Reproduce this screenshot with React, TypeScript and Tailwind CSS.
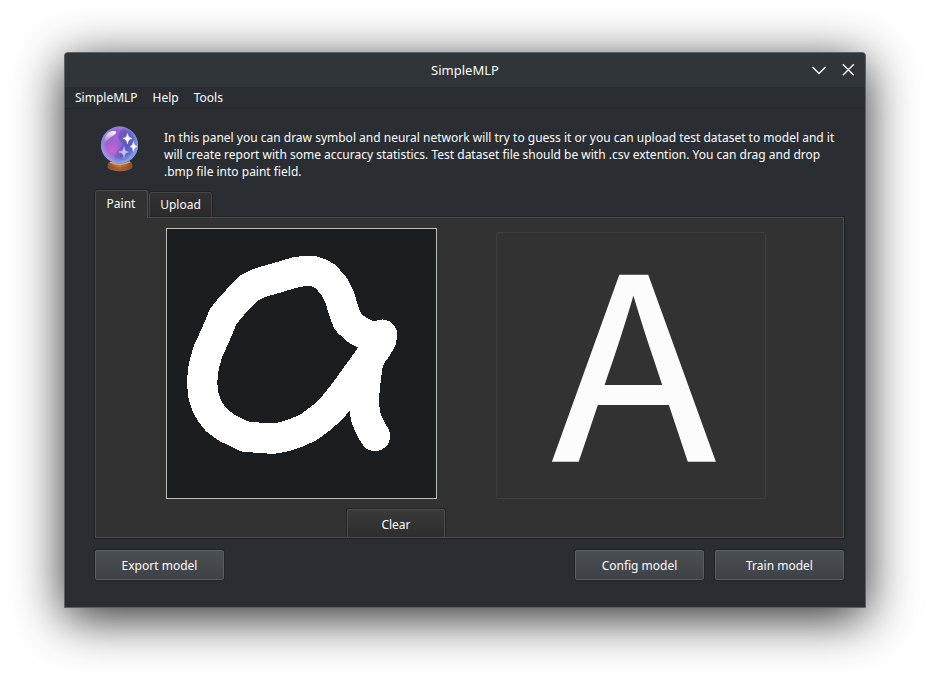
import type { ReactNode } from "react";

function CrystalBall() {
  return (
    <svg className="block h-[48px] w-[40px] shrink-0" viewBox="0 0 40 48">
      <defs>
        <linearGradient id="ball" x1="0.05" y1="0.3" x2="1" y2="0.75">
          <stop offset="0" stopColor="#8a62cc" />
          <stop offset="0.35" stopColor="#a862d0" />
          <stop offset="0.65" stopColor="#6a66cc" />
          <stop offset="1" stopColor="#86b4f0" />
        </linearGradient>
        <radialGradient id="pink" cx="0.5" cy="0.5" r="0.5">
          <stop offset="0" stopColor="#c865d2" />
          <stop offset="1" stopColor="#b060d0" stopOpacity="0" />
        </radialGradient>
        <radialGradient id="rim" cx="0.5" cy="0.45" r="0.55">
          <stop offset="0.65" stopColor="#8fb8f4" stopOpacity="0" />
          <stop offset="1" stopColor="#92bdf6" stopOpacity="0.85" />
        </radialGradient>
        <linearGradient id="base" x1="0" y1="0" x2="1" y2="0">
          <stop offset="0" stopColor="#8a4f30" />
          <stop offset="0.5" stopColor="#bd7647" />
          <stop offset="1" stopColor="#87492a" />
        </linearGradient>
        <linearGradient id="shine" x1="0.7" y1="0" x2="0.2" y2="1">
          <stop offset="0" stopColor="#ffffff" stopOpacity="0.95" />
          <stop offset="1" stopColor="#ffffff" stopOpacity="0.15" />
        </linearGradient>
      </defs>
      <path d="M9 36 C7 38 7 41 8.500 42.500 C13 46 27 46 31.500 42.500 C33 41 33 38 31 36Z" fill="url(#base)" />
      <path d="M8 39.500 C14 43 26 43 32 39.500 M9 42 C15 44.700 25 44.700 31 42" stroke="#8a4e2b" strokeWidth="0.8" fill="none" />
      <circle cx="19.500" cy="19" r="18.500" fill="url(#ball)" />
      <path d="M25 2 C14 8 18 13 22 17 C25 22 11 25 15 37 C28 41 38 30 38 19 C38 10 33 4 25 2Z" fill="#5354b7" opacity="0.6" />
      <circle cx="12" cy="24" r="11" fill="url(#pink)" />
      <circle cx="19.500" cy="19" r="18.500" fill="url(#rim)" />
      <path d="M10 36.200 C16 39.200 24 39.200 30 35.700" stroke="#e7a16c" strokeWidth="1.500" fill="none" />
      <path d="M5 17 C3 10 9 4 15 5 C18 7 14 9 11 11 C8 13 7 15 5 17Z" fill="url(#shine)" />
      <path d="M27.500 7.500 Q28 12 32 12.500 Q28 13 27.500 18 Q27 13 23 12.500 Q27 12 27.500 7.500Z" fill="#fff" stroke="#fff" strokeWidth="0.5" />
      <path d="M33.500 15.500 Q34 20 37 20.500 Q34 21 33.500 25.500 Q33 21 30 20.500 Q33 20 33.500 15.500Z" fill="#fff" stroke="#fff" strokeWidth="0.5" />
      <path d="M24 20.500 Q24.500 25.500 28.500 26 Q24.500 26.500 24 31.500 Q23.500 26.500 19 26 Q23.500 25.500 24 20.500Z" fill="#e6d5ff" stroke="#e6d5ff" strokeWidth="0.5" opacity="0.8" />
    </svg>
  );
}

function Drawing() {
  return (
    <svg
      className="block h-[269px] w-[269px]"
      viewBox="21 27 807 807"
      shapeRendering="crispEdges"
      fill="none"
      stroke="#ffffff"
      strokeWidth="91"
      strokeLinecap="round"
      strokeLinejoin="round"
    >
      <polyline points="640,352 610,340 588,328 563,304 550,270 540,235 523,200 497,170 480,160 462,154 436,153 410,156 352,173 300,188 267,204 213,260 189,291 167,344 144,394 131,440 126,488 131,530 140,556 152,578 169,600 198,622 255,650 322,655 348,655 378,649 410,638 445,622 485,593 518,562 553,518 584,475 618,428 650,383 663,362 666,344" />
      <polyline points="664,352 625,422 620,455 615,495 612,530 613,563 618,594 630,622 645,648" />
    </svg>
  );
}

function ActionButton({ children }: { children: ReactNode }) {
  return (
    <button className="flex h-[30px] w-[129px] items-center justify-center rounded-[2px] border border-[#595e62] bg-linear-to-b from-[#4a4f53] to-[#3e4246] pt-px shadow-[0_0_0_1px_#212529]">
      {children}
    </button>
  );
}

export default function App() {
  return (
    <div className="h-[684px] w-[930px] overflow-hidden bg-white pt-[52px] pl-[64px] font-['Noto_Sans',sans-serif] text-[12px] leading-[17px] text-[#fcfcfc]">
      <div className="flex h-[556px] w-[802px] flex-col overflow-hidden rounded-t-[4px] border border-[#5b6268] bg-[#2a2e32] shadow-[0_10px_50px_0_rgba(0,0,0,0.84)]">
        <header className="grid h-[34px] shrink-0 grid-cols-[1fr_auto_1fr] items-center bg-linear-to-b from-[#31363b] to-[#2f3438]">
          <span />
          <span className="pt-px text-[13px]">SimpleMLP</span>
          <div className="flex items-center justify-end gap-[13px] pr-[9px]">
            <svg className="block h-[16px] w-[16px]" viewBox="0 0 16 16" fill="none" stroke="#fcfcfc" strokeWidth="1.300">
              <path d="M1.500 5 L8 11.500 L14.500 5" />
            </svg>
            <svg className="block h-[16px] w-[16px]" viewBox="0 0 16 16" fill="none" stroke="#fcfcfc" strokeWidth="1.300">
              <path d="M2.800 2.200 L13.800 13.200 M13.800 2.200 L2.800 13.200" />
            </svg>
          </div>
        </header>
        <nav className="flex h-[22px] shrink-0 items-center gap-[15px] border-b border-[#24282b] pl-[10px]">
          <span>SimpleMLP</span>
          <span>Help</span>
          <span>Tools</span>
        </nav>
        <section className="flex h-[81px] shrink-0 pt-[17px] pl-[35px]">
          <CrystalBall />
          <p className="ml-[24px] pt-[3px] whitespace-nowrap">
            In this panel you can draw symbol and neural network will try to guess it or you can upload test dataset to model and it
            <br />
            will create report with some accuracy statistics. Test dataset file should be with .csv extention. You can drag and drop
            <br />
            .bmp file into paint field.
          </p>
        </section>
        <div className="z-10 flex h-[27px] shrink-0 items-end gap-px pl-[30px]">
          <div className="mb-[-1px] flex h-[28px] w-[53px] justify-center rounded-t-[3px] border border-b-0 border-[#4b4b4b] bg-[#323232] pt-[4px] pr-px shadow-[0_-1px_0_0_#1f2326,-1px_0_0_0_#1f2326]">
            Paint
          </div>
          <div className="flex h-[25px] w-[63px] justify-center rounded-t-[3px] border border-[#454545] border-b-[#1f2326] bg-linear-to-b from-[#313131] to-[#2b2b2b] pt-[3px] shadow-[0_-1px_0_0_#1f2326,1px_0_0_0_#1f2326]">
            Upload
          </div>
        </div>
        <main className="mx-[30px] flex h-[321px] w-[749px] shrink-0 flex-col overflow-hidden border border-[#4b4b4b] bg-[#323232] outline outline-[#1f2326]">
          <div className="flex shrink-0 items-end gap-[59px] pt-[10px] pl-[70px]">
            <div className="h-[271px] w-[271px] border border-[#c0bdb9] bg-[#1b1e20]">
              <Drawing />
            </div>
            <div className="flex h-[267px] w-[270px] items-center justify-center rounded-[2px] border border-[#3d3d3d] pb-[30px]">
              <span className="ml-[5px] scale-x-[1.065] font-['Noto_Sans_CJK_SC',sans-serif] text-[253px] leading-[230px] [-webkit-text-stroke:1.5px_#fcfcfc]">A</span>
            </div>
          </div>
          <button className="mt-[10px] ml-[251px] flex h-[30px] w-[98px] shrink-0 items-center justify-center rounded-[2px] border border-[#4c4c4c] bg-linear-to-b from-[#393939] to-[#2d2d2d] pt-px shadow-[0_0_0_1px_#242424]">
            Clear
          </button>
        </main>
        <footer className="flex gap-[11px] pt-[12px] pr-[21px] pl-[30px]">
          <div className="grow">
            <ActionButton>Export model</ActionButton>
          </div>
          <ActionButton>Config model</ActionButton>
          <ActionButton>Train model</ActionButton>
        </footer>
      </div>
    </div>
  );
}
